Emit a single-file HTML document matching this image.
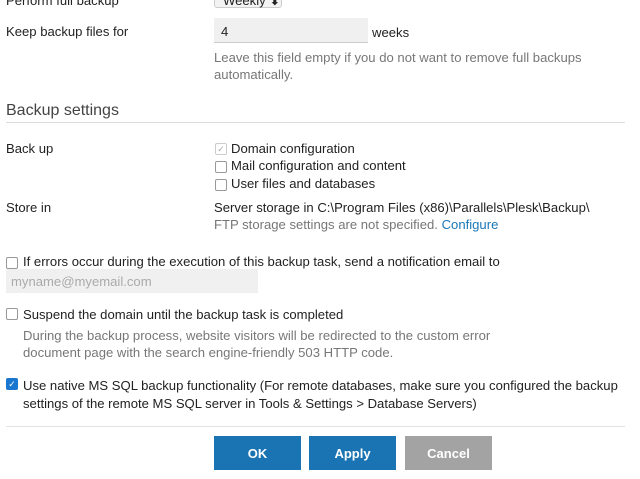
<html><head><style>
body{margin:0;width:640px;height:479px;background:#fff;font-family:"Liberation Sans",sans-serif;font-size:13.1px;color:#222;position:relative;overflow:hidden}
.a{position:absolute;white-space:nowrap;line-height:17px}
.g{color:#777}
.cb{position:absolute;width:10px;height:10px;border:1px solid #999;border-radius:2px;background:#fff}
.btn{position:absolute;top:436px;height:34px;width:87px;color:#fff;font-weight:bold;text-align:center;line-height:36px;font-size:13px}
</style></head><body>
<div class="a" style="left:6px;top:-8px">Perform full backup</div>
<div class="a" style="left:214px;top:-9px;width:68px;height:17px;border:1px solid #ccc;border-radius:3px;background:#f3f3f3;padding-left:8px;box-sizing:border-box">Weekly ⬍</div>
<div class="a" style="left:6px;top:23px">Keep backup files for</div>
<div class="a" style="left:214px;top:18px;width:154px;height:25px;background:#f0f0f0;border-bottom:1px solid #ccc;padding:5px 0 0 7px;box-sizing:border-box">4</div>
<div class="a" style="left:372px;top:24px">weeks</div>
<div class="a g" style="left:214px;top:49px">Leave this field empty if you do not want to remove full backups</div>
<div class="a g" style="left:214px;top:66px">automatically.</div>
<div class="a" style="left:6px;top:101px;font-size:16px;line-height:20px;color:#444">Backup settings</div>
<div style="position:absolute;left:6px;top:122px;width:619px;height:1px;background:#ddd"></div>
<div class="a" style="left:6px;top:140px">Back up</div>
<div class="cb" style="left:215px;top:143px;border-color:#ccc;color:#aaa;font-size:9px;line-height:10px;text-align:center">✓</div>
<div class="a" style="left:231px;top:140px">Domain configuration</div>
<div class="cb" style="left:215px;top:161px"></div>
<div class="a" style="left:231px;top:157px">Mail configuration and content</div>
<div class="cb" style="left:215px;top:179px"></div>
<div class="a" style="left:231px;top:175px">User files and databases</div>
<div class="a" style="left:6px;top:199px">Store in</div>
<div class="a" style="left:214px;top:199px">Server storage in C:\Program Files (x86)\Parallels\Plesk\Backup\</div>
<div class="a" style="left:214px;top:216px"><span class="g">FTP storage settings are not specified.</span> <span style="color:#1a77b7">Configure</span></div>
<div class="cb" style="left:6px;top:257px"></div>
<div class="a" style="left:23px;top:253px">If errors occur during the execution of this backup task, send a notification email to</div>
<div class="a" style="left:6px;top:269px;width:252px;height:24px;background:#f0f0f0;padding:4px 0 0 5px;box-sizing:border-box;color:#aaa">myname@myemail.com</div>
<div class="cb" style="left:6px;top:308px"></div>
<div class="a" style="left:23px;top:306px">Suspend the domain until the backup task is completed</div>
<div class="a g" style="left:23px;top:327px">During the backup process, website visitors will be redirected to the custom error</div>
<div class="a g" style="left:23px;top:344px">document page with the search engine-friendly 503 HTTP code.</div>
<div class="cb" style="left:6px;top:378px;background:#1a77d0;border-color:#1a77d0;color:#fff;font-size:9px;line-height:10px;text-align:center">✓</div>
<div class="a" style="left:23px;top:377px">Use native MS SQL backup functionality (For remote databases, make sure you configured the backup</div>
<div class="a" style="left:23px;top:395px">settings of the remote MS SQL server in Tools &amp; Settings &gt; Database Servers)</div>
<div style="position:absolute;left:6px;top:426px;width:619px;height:1px;background:#e3e3e3"></div>
<div class="btn" style="left:214px;background:#1a74b3">OK</div>
<div class="btn" style="left:309px;background:#1a74b3">Apply</div>
<div class="btn" style="left:405px;background:#a3a3a3">Cancel</div>
</body></html>
